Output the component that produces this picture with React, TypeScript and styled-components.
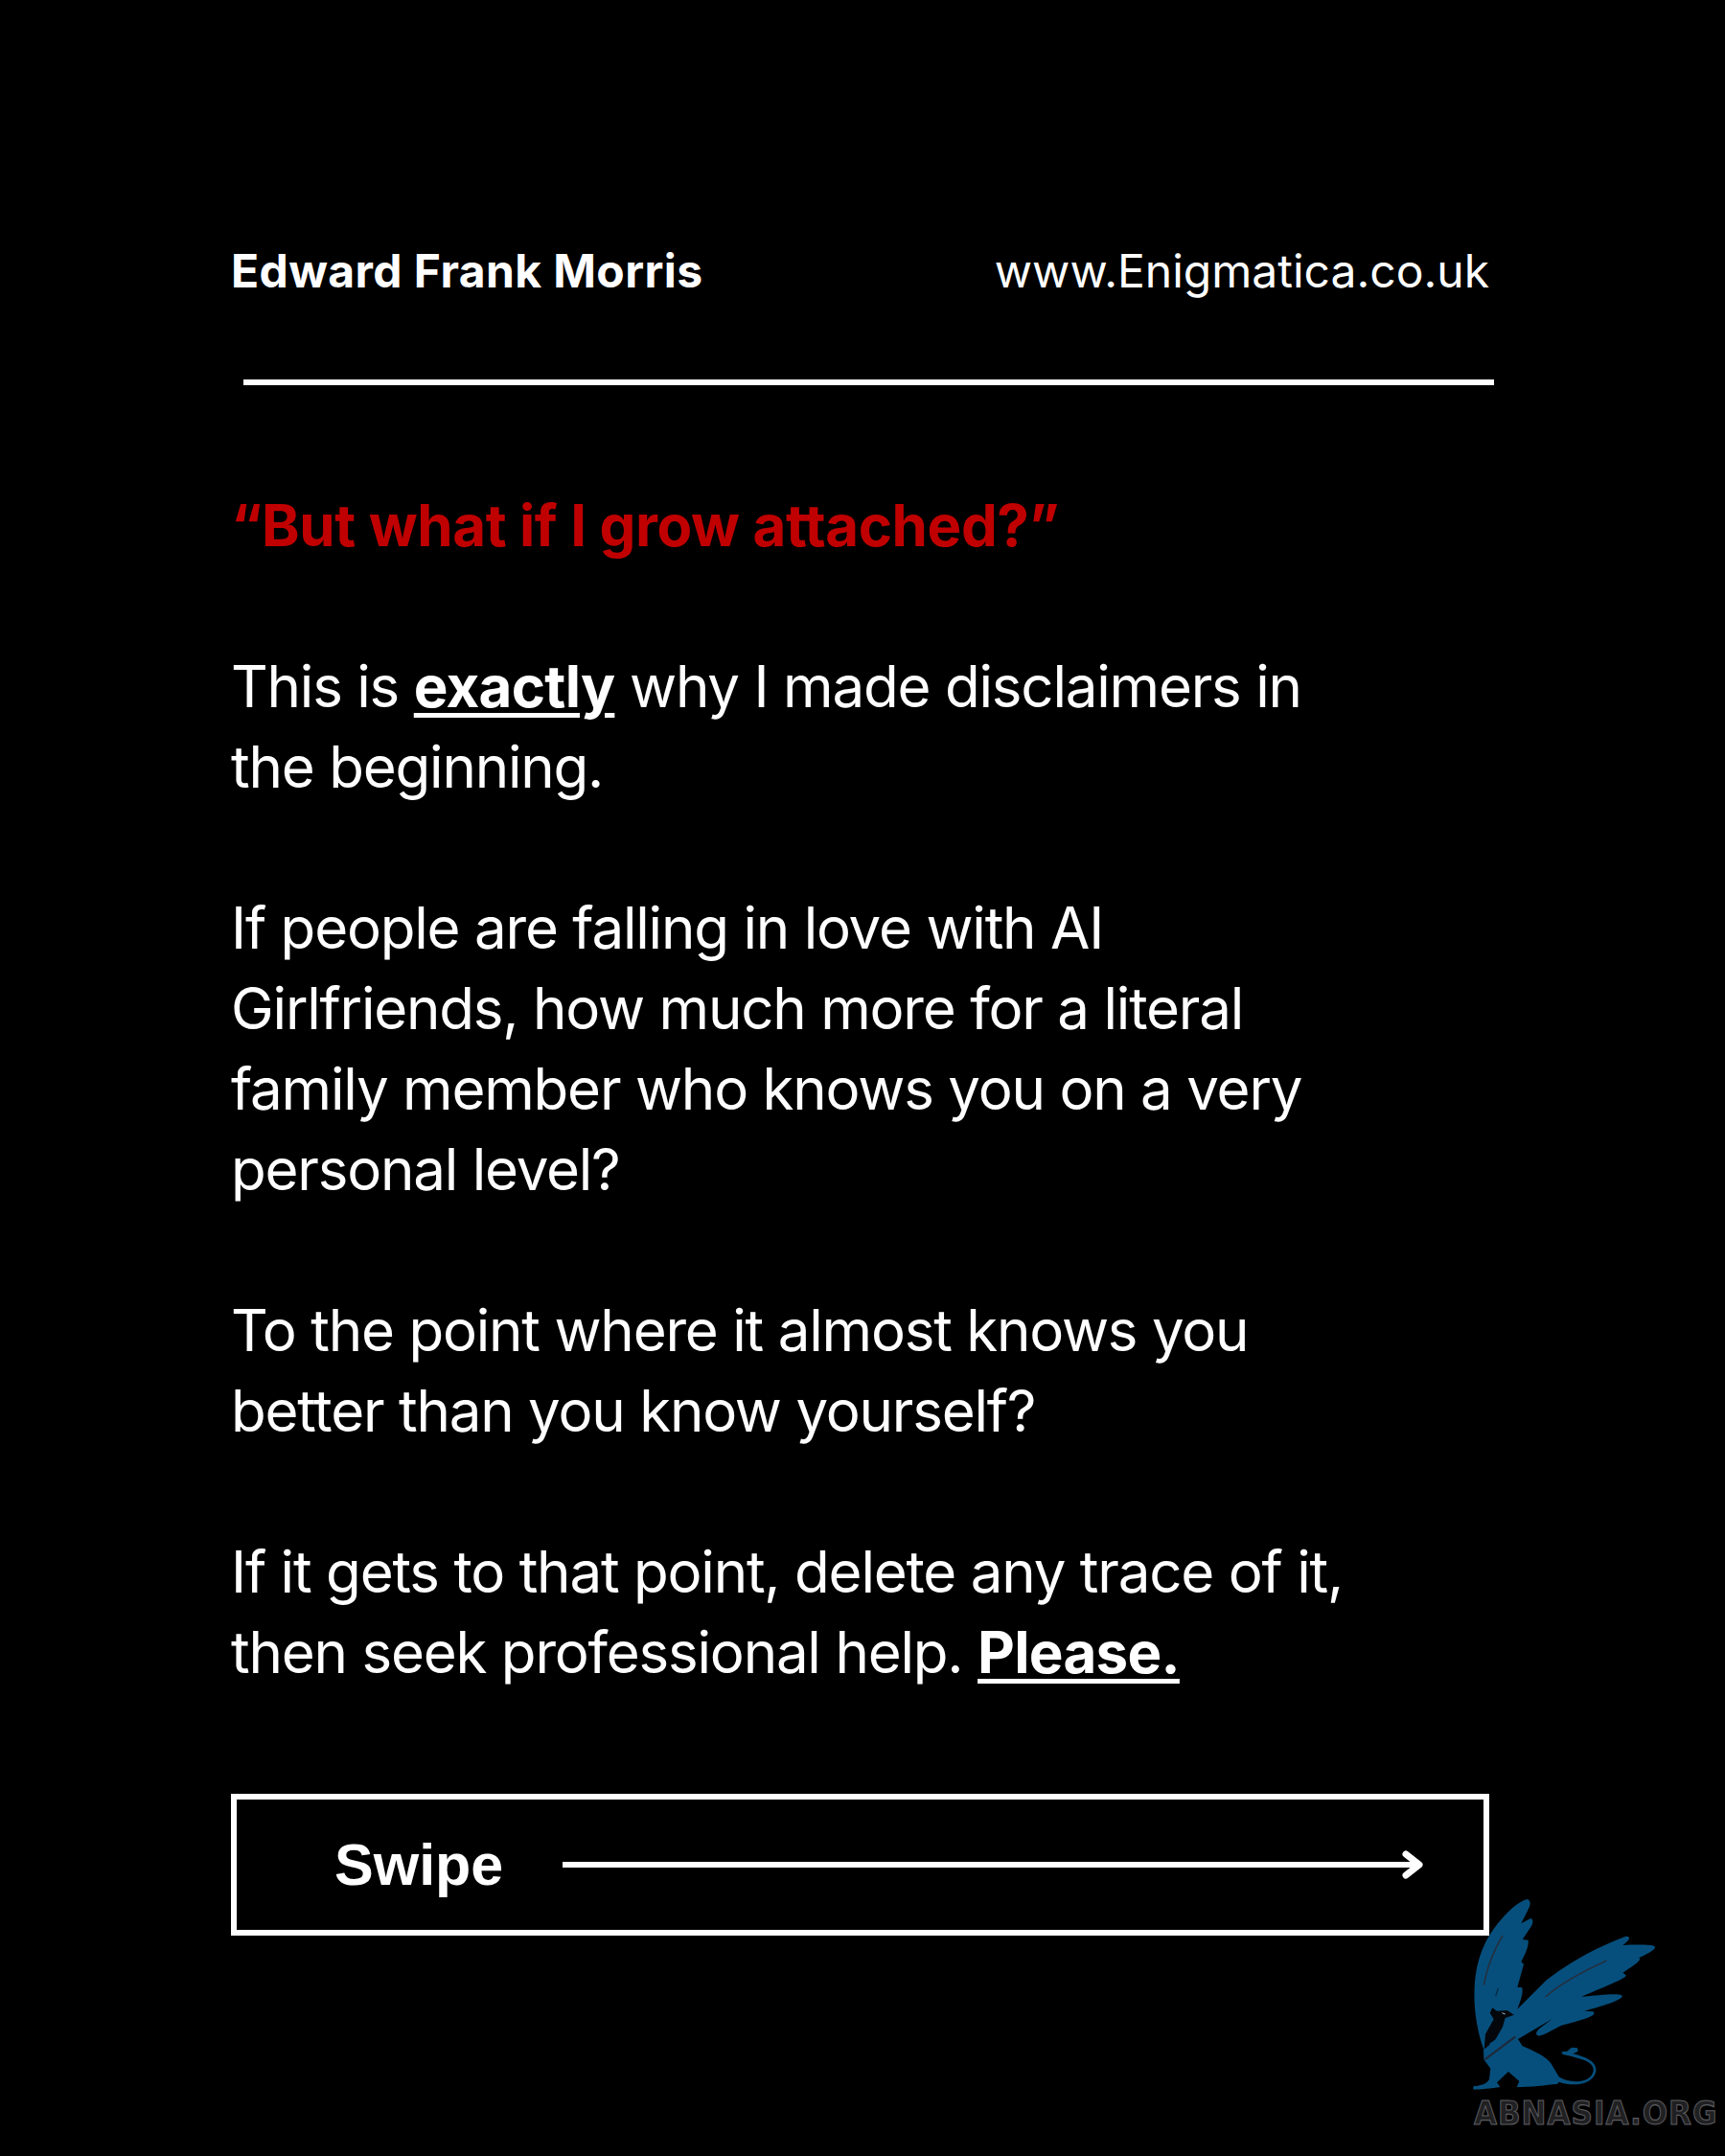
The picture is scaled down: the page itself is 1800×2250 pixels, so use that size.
import React from "react";
import styled, { createGlobalStyle } from "styled-components";

const Global = createGlobalStyle`
  html, body { margin: 0; padding: 0; background: #000; }
`;

const Page = styled.main`
  position: relative;
  width: 1800px;
  height: 2250px;
  box-sizing: border-box;
  padding: 254px 246px 0 241px;
  background: #000;
  color: #fff;
  font-family: Inter, "Liberation Sans", sans-serif;
  overflow: hidden;
`;

const Header = styled.header`
  display: flex;
  justify-content: space-between;
  align-items: baseline;
  line-height: 58px;
`;

const Author = styled.span`
  font-size: 48px;
  font-weight: 700;
  letter-spacing: 0.4px;
`;

const Site = styled.span`
  font-size: 48px;
  font-weight: 400;
`;

const Rule = styled.hr`
  width: 1305px;
  height: 6px;
  margin: 84px 0 0 13px;
  border: 0;
  background: #fff;
`;

const Copy = styled.section`
  margin-top: 104px;
  font-size: 60px;
  line-height: 84px;
  font-weight: 400;
  letter-spacing: -1.2px;
`;

const Question = styled.h1`
  margin: 0 0 84px;
  font-size: 60px;
  line-height: 84px;
  font-weight: 700;
  letter-spacing: -0.4px;
  color: #c00000;
`;

const Para = styled.p`
  margin: 0 0 84px;
`;

const Strong = styled.strong`
  font-weight: 700;
  letter-spacing: -0.7px;
  text-decoration: underline;
  text-decoration-thickness: 5px;
  text-underline-offset: 6px;
`;

const SwipeBox = styled.div`
  display: flex;
  align-items: center;
  box-sizing: border-box;
  width: 1313px;
  height: 148px;
  margin-top: 106px;
  padding: 0 40px 0 102px;
  border: 6px solid #fff;
`;

const SwipeLabel = styled.span`
  font-family: "Liberation Sans", Arial, sans-serif;
  font-size: 61px;
  font-weight: 700;
  line-height: 1;
`;

const ArrowIcon = styled.svg`
  display: block;
  flex: none;
  width: 898px;
  height: 30px;
  margin-left: 62px;
`;

const Badge = styled.div`
  position: absolute;
  right: 0;
  bottom: 0;
  width: 320px;
  height: 300px;
`;

const BadgeArt = styled.svg`
  display: block;
  width: 320px;
  height: 300px;
`;

const BadgeName = styled.span`
  position: absolute;
  left: 58px;
  top: 237px;
  font-family: "DejaVu Sans", sans-serif;
  font-size: 32px;
  line-height: 36px;
  font-weight: 700;
  letter-spacing: 1px;
  white-space: nowrap;
  color: #202022;
  -webkit-text-stroke: 1px #5c5c60;
  transform-origin: left center;
  transform: scale(0.97, 1.07);
`;

const BLUE = "#064f7d";

export default function App() {
  return (
    <Page>
      <Global />
      <Header>
        <Author>Edward Frank Morris</Author>
        <Site>www.Enigmatica.co.uk</Site>
      </Header>
      <Rule />
      <Copy>
        <Question>“But what if I grow attached?”</Question>
        <Para>
          This is <Strong>exactly</Strong> why I made disclaimers in
          <br />
          the beginning.
        </Para>
        <Para>
          If people are falling in love with AI
          <br />
          Girlfriends, how much more for a literal
          <br />
          family member who knows you on a very
          <br />
          personal level?
        </Para>
        <Para>
          To the point where it almost knows you
          <br />
          better than you know yourself?
        </Para>
        <Para>
          If it gets to that point, delete any trace of it,
          <br />
          then seek professional help. <Strong>Please.</Strong>
        </Para>
      </Copy>
      <SwipeBox>
        <SwipeLabel>Swipe</SwipeLabel>
        <ArrowIcon viewBox="0 0 898 30" fill="none" stroke="#fff" strokeLinecap="round" strokeLinejoin="round">
          <path d="M0 15H892" strokeWidth="6" strokeLinecap="butt" />
          <path d="M880 4L894 15L880 26" strokeWidth="7" />
        </ArrowIcon>
      </SwipeBox>
      <Badge>
        <BadgeArt viewBox="0 0 960 900">
          <path
            fill={BLUE}
            d="M340 96C352 98 352 112 346 124L322 172L352 156C360 158 360 170 354 180L326 222L344 224C346 240 338 262 322 292L330 300L310 372L324 372C330 384 322 410 310 440L400 350C470 295 560 245 650 212C664 212 666 222 640 240C680 238 720 238 738 242C746 248 740 256 690 280C700 284 690 294 640 326L650 334C652 344 600 362 510 402C560 396 620 390 636 396C644 404 630 416 520 446L548 448C556 458 546 466 452 490C420 504 395 522 378 524C366 522 366 512 380 500L420 470L312 534L326 556C370 575 400 590 415 610L440 652C470 672 520 672 540 650C556 630 548 612 520 600L480 588L452 582L448 574L466 572L480 560L498 562L500 572L484 580C525 590 560 605 556 635C548 675 490 685 440 668L436 674C400 678 350 684 308 684L316 666L282 636L246 670L256 684C230 688 195 692 172 692L172 682C190 680 215 676 222 660L226 626L205 598L204 565C185 510 172 440 176 370C180 290 205 225 250 170C280 135 310 105 340 96Z"
          />
          <path
            fill="#03070c"
            d="M224 452L232 436L246 446L278 444L300 458L272 468L264 496L240 538L206 566L210 518L236 472Z"
          />
          <path d="M262 452L272 456" stroke="#9fb4c4" strokeWidth="3" />
          <path d="M208 598L304 526" stroke="#1c2a3c" strokeWidth="7" />
          <path d="M224 552L248 536" stroke={BLUE} strokeWidth="8" />
          <path d="M264 210C240 250 215 310 205 365" stroke="#23303f" strokeWidth="5" fill="none" />
          <path d="M398 402C450 355 520 320 590 288" stroke="#23303f" strokeWidth="5" fill="none" />
          <path d="M250 375L242 400" stroke="#0a2a44" strokeWidth="4" />
        </BadgeArt>
        <BadgeName>ABNASIA.ORG</BadgeName>
      </Badge>
    </Page>
  );
}
